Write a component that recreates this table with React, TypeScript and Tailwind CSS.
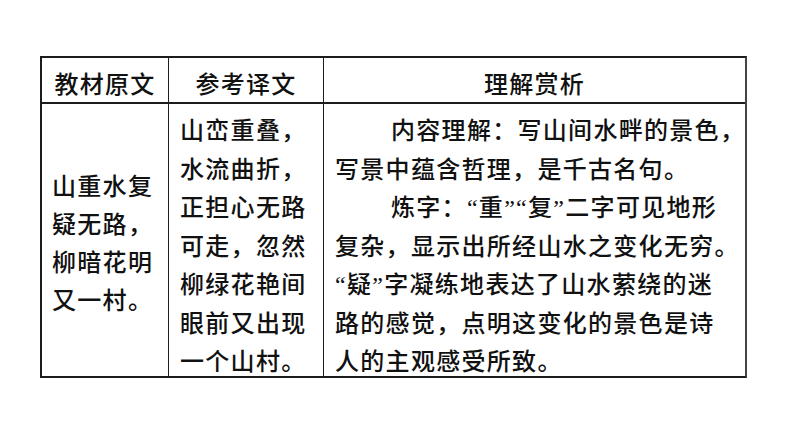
const font = { fontFamily: '"Liberation Serif", "Noto Sans CJK SC", serif' };

const original = ['山重水复', '疑无路，', '柳暗花明', '又一村。'];

const translation = ['山峦重叠，', '水流曲折，', '正担心无路', '可走，忽然', '柳绿花艳间', '眼前又出现', '一个山村。'];

const analysis = [
  { text: '内容理解：写山间水畔的景色，', indent: true },
  { text: '写景中蕴含哲理，是千古名句。', indent: false },
  { text: '炼字：“重”“复”二字可见地形', indent: true },
  { text: '复杂，显示出所经山水之变化无穷。', indent: false },
  { text: '“疑”字凝练地表达了山水萦绕的迷', indent: false },
  { text: '路的感觉，点明这变化的景色是诗', indent: false },
  { text: '人的主观感受所致。', indent: false },
];

export default function App() {
  return (
    <div className="min-h-[447px] w-[794px] bg-white pt-[56px] pl-[40px] text-[#111] font-medium" style={font}>
      <div className="w-[707px] border-2 border-[#1c1c1c] border-r-[#444] grid grid-cols-[127px_155px_421px] text-[24px] tracking-[1.3px]">
        {/* header */}
        <div className="h-[46px] border-b-2 border-r border-[#1c1c1c] flex items-center justify-center pt-[9px] leading-none whitespace-nowrap">
          教材原文
        </div>
        <div className="h-[46px] border-b-2 border-r border-[#1c1c1c] flex items-center justify-center pt-[9px] leading-none whitespace-nowrap">
          参考译文
        </div>
        <div className="h-[46px] border-b-2 border-[#1c1c1c] flex items-center justify-center pt-[9px] leading-none whitespace-nowrap">
          理解赏析
        </div>

        {/* body */}
        <div className="h-[272px] border-r border-[#1c1c1c] flex flex-col justify-center pl-[10px] pt-[8px] leading-[38px]">
          {original.map((line) => (
            <div key={line} className="whitespace-nowrap">{line}</div>
          ))}
        </div>
        <div className="h-[272px] border-r border-[#1c1c1c] pl-[11px] pt-[8px] leading-[38.5px]">
          {translation.map((line) => (
            <div key={line} className="whitespace-nowrap">{line}</div>
          ))}
        </div>
        <div className="h-[272px] pl-[11px] pt-[8px] leading-[38.5px]">
          {analysis.map((line) => (
            <div key={line.text} className={`whitespace-nowrap ${line.indent ? 'pl-[56px]' : ''}`}>
              {line.text}
            </div>
          ))}
        </div>
      </div>
    </div>
  );
}
